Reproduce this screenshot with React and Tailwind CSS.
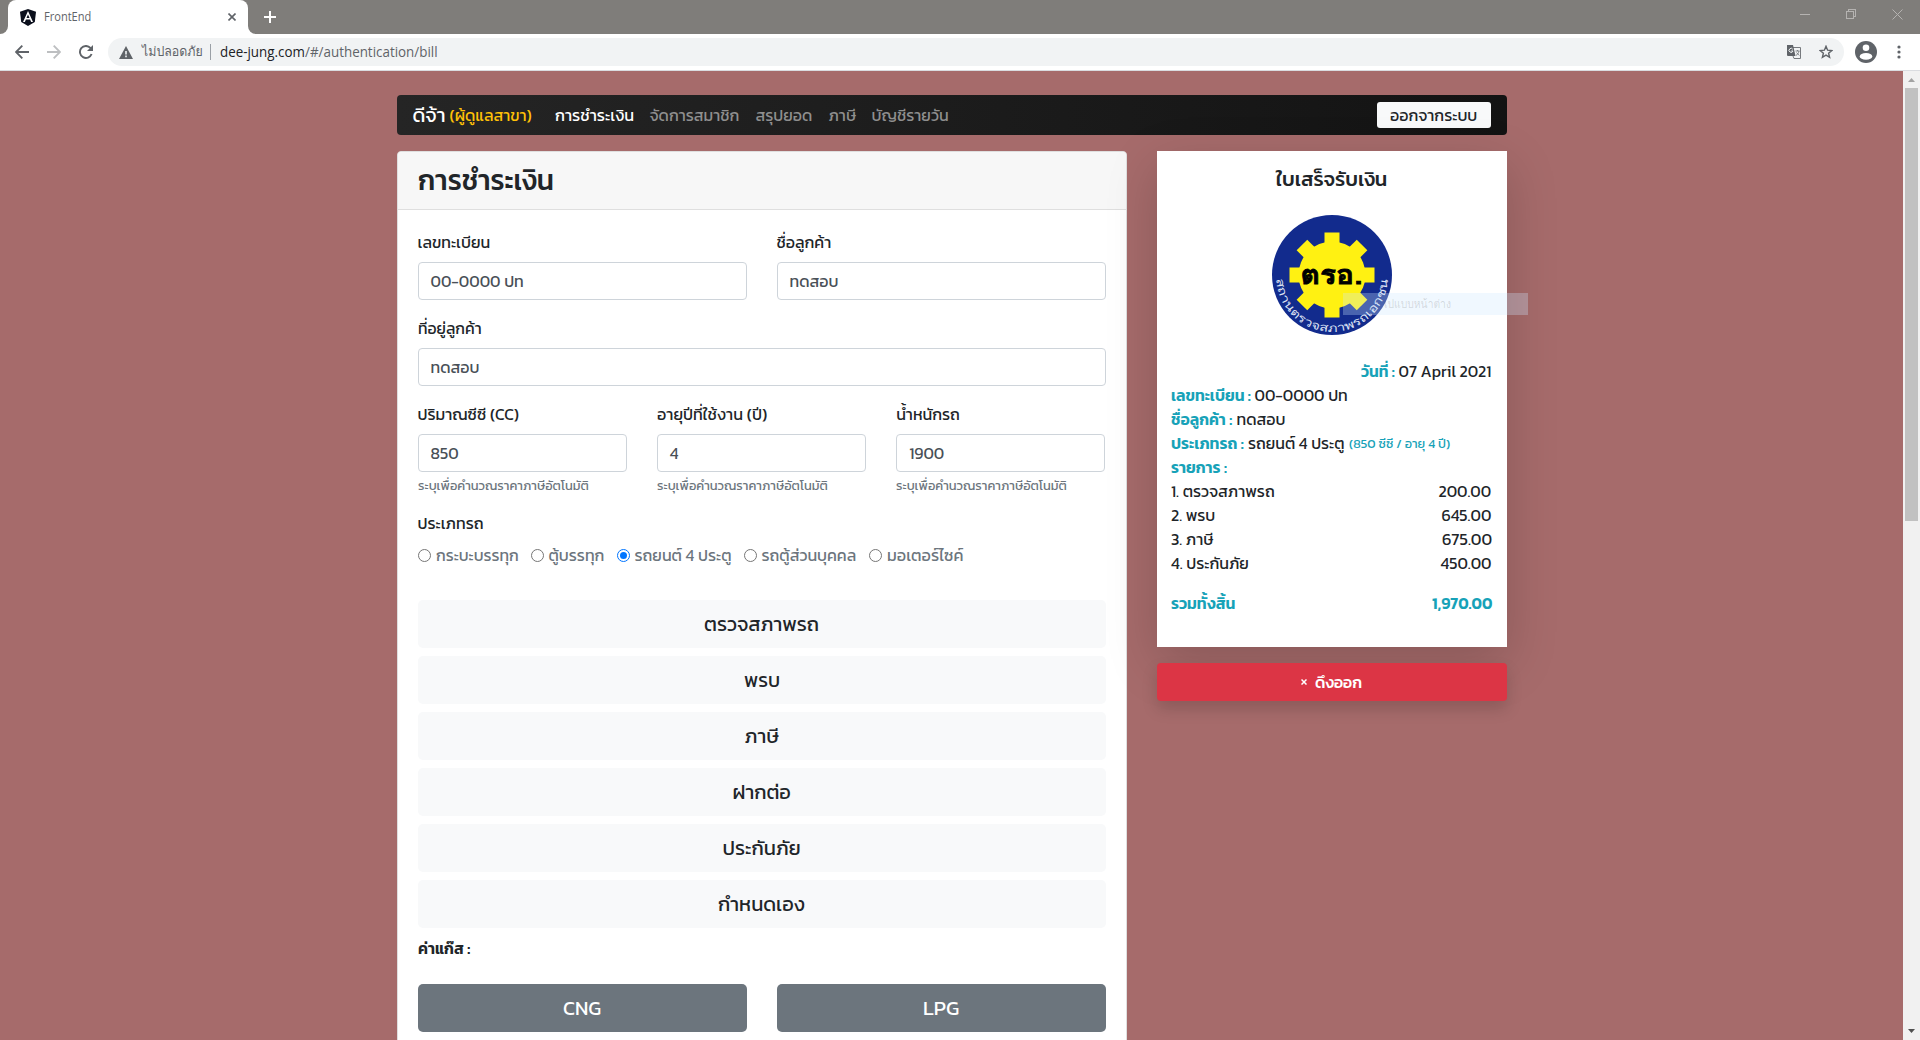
import React, { useLayoutEffect, useRef, useState } from "react";

// Renders a run of text condensed or expanded to the given width.
function Fit({ w, children, className = "" }) {
  const ref = useRef(null);
  const [scale, setScale] = useState(1);
  useLayoutEffect(() => {
    const natural = ref.current.offsetWidth;
    if (natural) setScale(w / natural);
  }, [w]);
  return (
    <span className={"inline-flex shrink-0 justify-start whitespace-nowrap " + className} style={{ width: w }}>
      <span ref={ref} className="inline-block shrink-0 origin-left" style={{ transform: `scaleX(${scale})` }}>
        {children}
      </span>
    </span>
  );
}

function BrowserChrome() {
  return (
    <header className="font-['Open_Sans','Loma','Garuda','Noto_Sans_Thai','Noto_Sans',sans-serif]">
      <div className="flex h-[34px] items-start bg-[#7f7d7a]">
        <div className="flex h-[34px] w-2 items-end bg-white">
          <div className="h-full w-2 rounded-br-lg bg-[#7f7d7a]" />
        </div>
        <div className="flex h-[34px] w-[240px] items-center bg-[#7f7d7a]">
          <div className="flex h-[34px] w-[240px] items-center rounded-t-lg bg-white pl-3">
            <svg width="16" height="17" viewBox="0 0 16 17">
              <path d="M8 0 16 2.8 14.8 13 8 17 1.2 13 0 2.8Z" fill="#0b0f1c" />
              <path d="M8 2 3 13h1.9l1-2.5h4.2l1 2.5H13ZM8 5.6 9.5 9h-3Z" fill="#fff" fillRule="evenodd" />
            </svg>
            <Fit w={47} className="ml-2 text-xs text-[#5f6368]">FrontEnd</Fit>
            <svg className="ml-[137px]" width="8" height="8" viewBox="0 0 8 8">
              <path d="M.5.5l7 7m0-7l-7 7" stroke="#5f6368" strokeWidth="1.6" />
            </svg>
          </div>
        </div>
        <div className="h-[34px] w-2 bg-white">
          <div className="h-full w-2 rounded-bl-lg bg-[#7f7d7a]" />
        </div>
        <svg className="mt-[11px] ml-2" width="12" height="12" viewBox="0 0 12 12">
          <path d="M6 0v12M0 6h12" stroke="#fff" strokeWidth="2" />
        </svg>
        <div className="mt-[9px] mr-[17px] ml-auto flex items-start gap-9">
          <svg width="10" height="10" viewBox="0 0 10 10" shapeRendering="crispEdges">
            <path d="M0 5.5h10" stroke="#b5b3b1" />
          </svg>
          <svg width="10" height="10" viewBox="0 0 10 10" shapeRendering="crispEdges">
            <path d="M.5 2.5h7v7h-7zM2.5 2V.5h7v7H8" fill="none" stroke="#b5b3b1" />
          </svg>
          <svg width="11" height="11" viewBox="0 0 11 11">
            <path d="M.5.5l10 10m0-10l-10 10" stroke="#b5b3b1" />
          </svg>
        </div>
      </div>
      <div className="flex h-[37px] items-center border-b border-[#dadce0] bg-white pb-0 pl-[15px]">
        <svg width="14" height="14" viewBox="0 0 14 14" fill="none" stroke="#5f6368" strokeWidth="1.9">
          <path d="M14 7H1.5M7.3.7 1 7l6.3 6.3" />
        </svg>
        <svg className="ml-[18px]" width="14" height="14" viewBox="0 0 14 14" fill="none" stroke="#bdbfc1" strokeWidth="1.9">
          <path d="M0 7h12.5M6.7.7 13 7l-6.3 6.3" />
        </svg>
        <svg className="ml-[18px]" width="14" height="14" viewBox="0 0 14 14" fill="none" stroke="#5f6368" strokeWidth="1.9">
          <path d="M12.6 9A6 6 0 1 1 11.4 2.9L12.5 4" />
          <path d="M14 0v6H8Z" fill="#5f6368" stroke="none" />
        </svg>
        <div className="ml-[15px] flex h-7 w-[1736px] items-center rounded-full bg-[#f1f3f4] pl-[11px]">
          <svg width="14" height="13" viewBox="0 0 14 13">
            <path d="M7 0 14 13H0Z" fill="#5f6368" />
            <path d="M6.2 5h1.6v3.5H6.2zM6.2 9.6h1.6v1.6H6.2z" fill="#f1f3f4" />
          </svg>
          <Fit w={61} className="ml-[9px] text-[13px] text-[#5f6368]">ไม่ปลอดภัย</Fit>
          <div className="ml-[7px] h-4 w-px bg-[#9aa0a6]" />
          <Fit w={85} className="ml-[9px] text-sm text-[#202124]">dee-jung.com</Fit>
          <Fit w={133} className="text-sm text-[#5f6368]">/#/authentication/bill</Fit>
          <svg className="ml-auto" width="14" height="14" viewBox="0 0 14 14">
            <path d="M6 2.5h7.5v11H7L6 11" fill="none" stroke="#777a7e" />
            <path d="M0 0h6l2.5 11H1a1 1 0 0 1-1-1Z" fill="#5f6368" />
            <path d="M5.8 4.3A2 2 0 1 0 6 6H4.2" fill="none" stroke="#f1f3f4" />
            <path d="M8.5 6h4M10.5 5v1M12 6c-.4 2.2-1.8 3.8-3 4.5M9.5 7.5l2.8 3" fill="none" stroke="#777a7e" strokeWidth=".9" />
          </svg>
          <svg className="mr-[11px] ml-[18px]" width="14" height="14" viewBox="0 0 14 14">
            <path d="M7 1.3 8.6 5.2l4.2.3-3.2 2.7 1 4.1L7 10.1l-3.6 2.2 1-4.1L1.200 5.500l4.200-.3Z" fill="none" stroke="#5f6368" strokeWidth="1.4" />
          </svg>
        </div>
        <svg className="ml-[11px]" width="22" height="22" viewBox="0 0 22 22">
          <circle cx="11" cy="11" r="11" fill="#5f6368" />
          <circle cx="11" cy="6.800" r="3.300" fill="#fff" />
          <ellipse cx="11" cy="15.400" rx="6.300" ry="3.400" fill="#fff" />
        </svg>
        <svg className="ml-5" width="4" height="14" viewBox="0 0 4 14" fill="#5f6368">
          <circle cx="2" cy="2" r="1.600" />
          <circle cx="2" cy="7" r="1.600" />
          <circle cx="2" cy="12" r="1.600" />
        </svg>
      </div>
    </header>
  );
}

function Navbar() {
  return (
    <nav className="flex h-10 items-center rounded bg-linear-to-r from-[#252525] to-[#131313] pr-4 pl-4 text-base text-[#8f8f8f]">
      <Fit w={33} className="text-xl text-white">ดีจ้า</Fit>
      <Fit w={82} className="ml-1 text-base text-[#ffc107]">(ผู้ดูแลสาขา)</Fit>
      <Fit w={79} className="ml-[23px] text-white">การชำระเงิน</Fit>
      <Fit w={90} className="ml-4">จัดการสมาชิก</Fit>
      <Fit w={57} className="ml-4">สรุปยอด</Fit>
      <Fit w={28} className="ml-4">ภาษี</Fit>
      <Fit w={77} className="ml-[15px]">บัญชีรายวัน</Fit>
      <button className="ml-auto flex h-[26px] w-[114px] items-center justify-center rounded-[3px] bg-[#f8f9fa] text-[#212529]">
        <Fit w={87}>ออกจากระบบ</Fit>
      </button>
    </nav>
  );
}

function Field({ label, lw, value, vw, help }) {
  return (
    <div>
      <div className="mb-2 flex h-6 items-center"><Fit w={lw}>{label}</Fit></div>
      <div className="flex h-[38px] items-center rounded border border-[#ced4da] bg-white px-3 text-[#495057]">
        <Fit w={vw}>{value}</Fit>
      </div>
      {help && (
        <div className="mt-1 flex h-[19px] items-center text-[13px] text-[#6c757d]"><Fit w={171}>{help}</Fit></div>
      )}
    </div>
  );
}

const vehicles = [
  ["กระบะบรรทุก", 83],
  ["ตู้บรรทุก", 56],
  ["รถยนต์ 4 ประตู", 97],
  ["รถตู้ส่วนบุคคล", 95],
  ["มอเตอร์ไซค์", 76],
];

const services = [
  ["ตรวจสภาพรถ", 115],
  ["พรบ", 36],
  ["ภาษี", 34],
  ["ฝากต่อ", 58],
  ["ประกันภัย", 78],
  ["กำหนดเอง", 87],
];

function PaymentCard() {
  const help = "ระบุเพื่อคำนวณราคาภาษีอัตโนมัติ";
  return (
    <section className="h-[1000px] w-[730px] rounded border border-[#dfdfdf] bg-white">
      <div className="flex h-[58px] items-center rounded-t border-b border-[#dfdfdf] bg-[#f7f7f7] px-5 pb-px text-[28px] font-medium">
        <Fit w={136}>การชำระเงิน</Fit>
      </div>
      <div className="px-5 pt-5">
        <div className="grid grid-cols-2 gap-[30px]">
          <Field label="เลขทะเบียน" lw={73} value="00-0000 ปท" vw={93} />
          <Field label="ชื่อลูกค้า" lw={55} value="ทดสอบ" vw={49} />
        </div>
        <div className="mt-4"><Field label="ที่อยู่ลูกค้า" lw={64} value="ทดสอบ" vw={49} /></div>
        <div className="mt-4 grid grid-cols-3 gap-[30px]">
          <Field label="ปริมาณซีซี (CC)" lw={102} value="850" vw={28} help={help} />
          <Field label="อายุปีที่ใช้งาน (ปี)" lw={110} value="4" vw={9} help={help} />
          <Field label="น้ำหนักรถ" lw={64} value="1900" vw={35} help={help} />
        </div>
        <div className="mt-4 flex h-6 items-center"><Fit w={66}>ประเภทรถ</Fit></div>
        <div className="mt-2 flex h-6 items-center gap-3 text-[#6c757d]">
          {vehicles.map(([name, w], i) => (
            <label key={name} className="flex items-center">
              {i === 2 ? (
                <span className="mr-[5px] flex h-[13px] w-[13px] items-center justify-center rounded-full border border-[#0075ff] bg-white">
                  <span className="h-[7px] w-[7px] rounded-full bg-[#0075ff]" />
                </span>
              ) : (
                <span className="mr-[5px] h-[13px] w-[13px] rounded-full border border-[#767676] bg-white" />
              )}
              <Fit w={w}>{name}</Fit>
            </label>
          ))}
        </div>
        <div className="mt-[33px] grid gap-2">
          {services.map(([name, w]) => (
            <button key={name} className="flex h-12 items-center justify-center rounded-[5px] bg-[#f8f9fa] text-xl">
              <Fit w={w}>{name}</Fit>
            </button>
          ))}
        </div>
        <div className="mt-2 flex h-6 items-center font-semibold"><Fit w={52}>ค่าแก๊ส :</Fit></div>
        <div className="mt-6 grid grid-cols-2 gap-[30px] text-xl text-white">
          <button className="flex h-12 items-center justify-center rounded-[5px] bg-[#6c757d]"><Fit w={38}>CNG</Fit></button>
          <button className="flex h-12 items-center justify-center rounded-[5px] bg-[#6c757d]"><Fit w={36}>LPG</Fit></button>
        </div>
      </div>
    </section>
  );
}

function Logo() {
  return (
    <svg width="120" height="120" viewBox="0 0 120 120" className="overflow-visible">
      <circle cx="60" cy="60" r="60" fill="#122b8d" />
      <g fill="#fff112">
        <circle cx="60" cy="60" r="33.5" />
        {[0, 45, 90, 135].map((a) => (
          <rect key={a} x="52.5" y="17.500" width="15" height="85" transform={`rotate(${a} 60 60)`} />
        ))}
      </g>
      <text x="28.500" y="69" textLength="62" lengthAdjust="spacingAndGlyphs" fontSize="27" fontWeight="700" fill="#000" stroke="#000" strokeWidth=".8" className="font-['Loma','Garuda','Norasi','Kanit',sans-serif]">ตรอ.</text>
      <path id="ring" d="M4 61A56 56 0 0 0 116 61" fill="none" />
      <text fontSize="11.500" fill="#dfe4f5" className="font-['Loma','Garuda','Norasi','Kanit',sans-serif]">
        <textPath href="#ring" startOffset="3" textLength="169" lengthAdjust="spacingAndGlyphs">สถานตรวจสภาพรถเอกชน</textPath>
      </text>
    </svg>
  );
}

const items = [
  ["1. ตรวจสภาพรถ", 104, "200.00", 53],
  ["2. พรบ", 44, "645.00", 50],
  ["3. ภาษี", 42, "675.00", 50],
  ["4. ประกันภัย", 78, "450.00", 51],
];

function Entry({ label, lw, children }) {
  return (
    <div className="flex h-6 items-center gap-1">
      <Fit w={lw} className="font-semibold text-[#17a2b8]">{label}</Fit>
      {children}
    </div>
  );
}

function Receipt() {
  return (
    <aside className="w-[350px]">
      <div className="relative h-[496px] bg-white pt-4 pr-[15px] pl-[14.5px] shadow-[0_16px_48px_rgba(0,0,0,0.175)]">
        <h5 className="flex h-6 items-center justify-center text-xl font-medium"><Fit w={111}>ใบเสร็จรับเงิน</Fit></h5>
        <div className="mt-6 flex justify-center pl-px"><Logo /></div>
        <div className="mt-6 flex h-6 items-center justify-end gap-1">
          <Fit w={34} className="font-semibold text-[#17a2b8]">วันที่ :</Fit>
          <Fit w={93}>07 April 2021</Fit>
        </div>
        <Entry label="เลขทะเบียน :" lw={79.5}><Fit w={93}>00-0000 ปท</Fit></Entry>
        <Entry label="ชื่อลูกค้า :" lw={61.5}><Fit w={49}>ทดสอบ</Fit></Entry>
        <Entry label="ประเภทรถ :" lw={73}>
          <Fit w={96.5}>รถยนต์ 4 ประตู</Fit>
          <Fit w={101} className="pt-0.5 text-[13px] text-[#17a2b8]">(850 ซีซี / อายุ 4 ปี)</Fit>
        </Entry>
        <Entry label="รายการ :" lw={56} />
        {items.map(([name, nw, price, pw]) => (
          <div key={name} className="flex h-6 items-center justify-between">
            <Fit w={nw}>{name}</Fit>
            <Fit w={pw}>{price}</Fit>
          </div>
        ))}
        <div className="mt-4 flex h-6 items-center justify-between font-semibold text-[#17a2b8]">
          <Fit w={64}>รวมทั้งสิ้น</Fit>
          <Fit w={60}>1,970.00</Fit>
        </div>
        <div className="absolute top-[142px] left-[186px] flex h-[22px] w-[185px] items-center bg-[#cce8ff]/30 pl-[41px] text-xs text-[#555]/20">
          <Fit w={67} className="font-['Open_Sans','Loma','Garuda',sans-serif]">เปแบบหน้าต่าง</Fit>
        </div>
      </div>
      <button className="relative mt-4 flex h-[38px] w-full items-center justify-center rounded bg-[#dc3545] text-white shadow-[0_8px_16px_rgba(0,0,0,0.15)]">
        <svg width="6" height="6" viewBox="0 0 6 6"><path d="M.5.5l5 5m0-5l-5 5" stroke="#fff" strokeWidth="1.500" /></svg>
        <Fit w={47} className="ml-2 font-medium">ดึงออก</Fit>
      </button>
    </aside>
  );
}

export default function App() {
  return (
    <div className="flex h-[1040px] w-[1920px] flex-col overflow-hidden bg-[#a66b6b]">
      <BrowserChrome />
      <div className="flex min-h-0 flex-1">
        <main className="w-[1903px] overflow-hidden pt-6 font-['Kanit','Noto_Sans_Thai','Prompt','Roboto',sans-serif] text-base text-[#212529]">
          <div className="mx-auto w-[1110px]">
            <Navbar />
            <div className="mt-4 flex items-start justify-between">
              <PaymentCard />
              <Receipt />
            </div>
          </div>
        </main>
        <div className="flex w-[17px] flex-col items-center bg-[#f1f1f1]">
          <svg className="mt-[7px]" width="7" height="4" viewBox="0 0 7 4"><path d="M0 4 3.500 0 7 4Z" fill="#a3a3a3" /></svg>
          <div className="mt-[6px] h-[433px] w-[13px] bg-[#c1c1c1]" />
          <svg className="mt-auto mb-[7px]" width="7" height="4" viewBox="0 0 7 4"><path d="M0 0h7L3.500 4Z" fill="#505050" /></svg>
        </div>
      </div>
    </div>
  );
}
